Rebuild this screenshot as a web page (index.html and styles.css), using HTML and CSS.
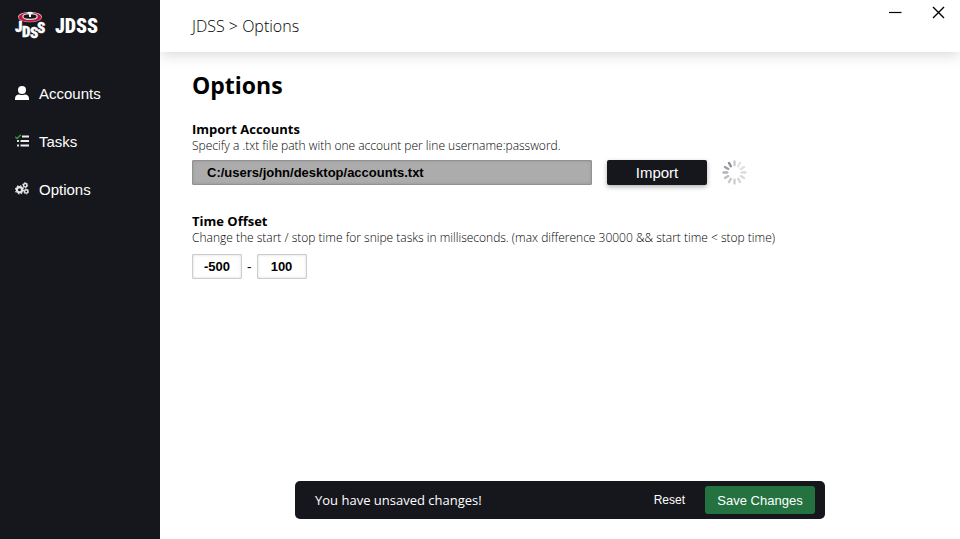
FILE: index.html
```html
<!DOCTYPE html>
<html lang="en">
<head>
<meta charset="utf-8">
<title>JDSS - Options</title>
<link rel="stylesheet" href="styles.css">
</head>
<body>
<div class="app">
  <aside class="sidebar">
    <div class="brand">
      <svg class="brand-mark" viewBox="0 0 30 30" aria-hidden="true">
        <ellipse cx="15" cy="6" rx="12" ry="5.300" fill="#d0bcc2"/>
        <ellipse cx="15" cy="6.200" rx="11.300" ry="4.600" fill="#c20f3b"/>
        <ellipse cx="15" cy="5.500" rx="7.200" ry="2.900" fill="#16171c" stroke="#ddd" stroke-width="1.300"/>
        <path d="M12.500 1h5v1.500L16 3.500V6h-2V3.500l-1.500-1z" fill="#f4f4f4"/>
        <g class="brand-glyphs">
          <text x="0" y="21">J</text>
          <text x="7" y="26">D</text>
          <text x="15" y="27">S</text>
          <text x="22" y="22">S</text>
        </g>
      </svg>
      <span class="brand-name">JDSS</span>
    </div>
    <nav class="nav">
      <a class="nav-link" href="#accounts">
        <svg class="nav-icon" viewBox="0 0 14 14" aria-hidden="true"><circle cx="7" cy="4" r="4" fill="#fff"/><path d="M0 14v-1.500C0 10 2 8.500 4 8.500c2 .8 4 .8 6 0 2 0 4 1.500 4 4V14z" fill="#fff"/></svg>
        Accounts
      </a>
      <a class="nav-link" href="#tasks">
        <svg class="nav-icon" viewBox="0 0 14 14" aria-hidden="true"><path d="M7 2.500h7M5.500 7H14M5.500 11.500H14" stroke="#eee" stroke-width="1.900"/><path d="M2 7h2M2 11.500h2" stroke="#ddd" stroke-width="1.800"/><path d="m.3 2.800 1.800 1.700L5.800.7" fill="none" stroke="#2d9a36" stroke-width="1.400"/></svg>
        Tasks
      </a>
      <a class="nav-link" href="#options">
        <svg class="nav-icon" viewBox="0 0 14 14" aria-hidden="true">
          <g fill="none" stroke="#e6e6e8">
            <circle cx="4.500" cy="7.800" r="2.600" stroke-width="2.200"/><circle cx="4.500" cy="7.800" r="4" stroke-width="1.200" stroke-dasharray="1.570 1.570"/>
            <circle cx="10.200" cy="3.200" r="1.700" stroke-width="1.500"/><circle cx="10.200" cy="3.200" r="2.600" stroke-width=".8" stroke-dasharray="1.360 1.360"/>
            <circle cx="11.200" cy="9.400" r="1.700" stroke-width="1.500"/><circle cx="11.200" cy="9.400" r="2.600" stroke-width=".8" stroke-dasharray="1.360 1.360"/>
          </g>
        </svg>
        Options
      </a>
    </nav>
  </aside>
  <div class="main">
    <header class="topbar">
      <div class="crumbs">JDSS &gt; Options</div>
      <div class="window-buttons">
        <button class="window-button" type="button" aria-label="Minimize"><svg viewBox="0 0 13 13" aria-hidden="true"><path d="M0 6.500h12.500" stroke="#000" stroke-width="1.200"/></svg></button>
        <button class="window-button" type="button" aria-label="Close"><svg viewBox="0 0 13 13" aria-hidden="true"><path d="m1 1 11 11M12 1 1 12" stroke="#000" stroke-width="1.400"/></svg></button>
      </div>
    </header>
    <main class="content">
      <h1 class="title">Options</h1>
      <section class="setting">
        <h2 class="setting-title"><label for="path">Import Accounts</label></h2>
        <p class="setting-text">Specify a .txt file path with one account per line username:password.</p>
        <div class="import-row">
          <input class="field path-field" id="path" type="text" value="C:/users/john/desktop/accounts.txt">
          <button class="import-button" type="button">Import</button>
          <svg class="spinner" viewBox="-13 -13 26 26" aria-hidden="true">
            <g stroke-width="2.400" stroke-linecap="round">
              <path d="M0-7.500V-11.500" stroke="#c9c9cc"/>
              <path d="M0-7.500V-11.500" stroke="#e2e2e5" transform="rotate(30)"/>
              <path d="M0-7.500V-11.500" stroke="#e0e0e3" transform="rotate(60)"/>
              <path d="M0-7.500V-11.500" stroke="#dcdcdf" transform="rotate(90)"/>
              <path d="M0-7.500V-11.500" stroke="#d9d9dc" transform="rotate(120)"/>
              <path d="M0-7.500V-11.500" stroke="#d5d5d8" transform="rotate(150)"/>
              <path d="M0-7.500V-11.500" stroke="#ceced2" transform="rotate(180)"/>
              <path d="M0-7.500V-11.500" stroke="#c8c8cc" transform="rotate(210)"/>
              <path d="M0-7.500V-11.500" stroke="#bebec3" transform="rotate(240)"/>
              <path d="M0-7.500V-11.500" stroke="#b2b2b8" transform="rotate(270)"/>
              <path d="M0-7.500V-11.500" stroke="#9d9da5" transform="rotate(300)"/>
              <path d="M0-7.500V-11.500" stroke="#8b8b93" transform="rotate(330)"/>
            </g>
          </svg>
        </div>
      </section>
      <section class="setting">
        <h2 class="setting-title">Time Offset</h2>
        <p class="setting-text">Change the start / stop time for snipe tasks in milliseconds. (max difference 30000 &amp;&amp; start time &lt; stop time)</p>
        <div class="offset-row">
          <input class="field time-field" type="text" value="-500" aria-label="Start offset">
          <span>-</span>
          <input class="field time-field" type="text" value="100" aria-label="Stop offset">
        </div>
      </section>
    </main>
    <div class="notice" role="status">
      <span class="notice-text">You have unsaved changes!</span>
      <button class="reset-button" type="button">Reset</button>
      <button class="save-button" type="button">Save Changes</button>
    </div>
  </div>
</div>
</body>
</html>
```
FILE: styles.css
```css
* {
  box-sizing: border-box;
}

body {
  margin: 0;
  background: #fff;
  color: #000;
  font-family: "Open Sans", "Noto Sans", sans-serif;
}

button,
input {
  margin: 0;
  border: 0;
  font-family: "Liberation Sans", sans-serif;
}

button {
  cursor: pointer;
}

.app {
  display: grid;
  grid-template-columns: 160px 1fr;
  min-height: 100vh;
}

.sidebar {
  z-index: 1;
  background: #16171c;
  color: #fff;
}

.brand {
  display: flex;
  align-items: center;
  gap: 10px;
  height: 52px;
  padding-left: 15px;
}

.brand-mark {
  width: 30px;
  height: 30px;
  overflow: visible;
}

.brand-glyphs {
  fill: #fff;
  stroke: #fff;
  stroke-width: 0.4px;
  font: 900 15px "Roboto Condensed", Roboto, sans-serif;
}

.brand-name {
  font: 900 20px "Roboto Condensed", Roboto, sans-serif;
}

.nav {
  padding-top: 17px;
}

.nav-link {
  display: flex;
  align-items: center;
  gap: 10px;
  height: 48px;
  padding-left: 15px;
  color: #fff;
  font: 15px "Liberation Sans", sans-serif;
  text-decoration: none;
}

.nav-icon {
  width: 14px;
  height: 14px;
}

.main {
  display: flex;
  flex-direction: column;
}

.topbar {
  display: flex;
  justify-content: space-between;
  height: 52px;
  padding-left: 32px;
  box-shadow: 0 2px 14px rgba(0, 0, 0, 0.17);
}

.crumbs {
  font-size: 16px;
  font-weight: 300;
  line-height: 53px;
}

.window-buttons {
  display: flex;
  gap: 30px;
  padding: 6px 15px 0 0;
}

.window-button {
  width: 13px;
  height: 13px;
  padding: 0;
  background: none;
}

.window-button svg {
  display: block;
}

.content {
  flex: 1;
  padding: 15px 32px;
}

.title {
  margin: 0 0 18px;
  font-size: 23px;
  line-height: 36px;
}

.setting {
  margin-bottom: 28px;
}

.setting-title {
  margin: 0;
  font-size: 13px;
  line-height: 16px;
}

.setting-text {
  margin: 0 0 6px;
  font-size: 12px;
  font-weight: 300;
  line-height: 17px;
}

.import-row {
  display: flex;
  align-items: center;
  gap: 15px;
}

.field {
  height: 25px;
  border: 1px solid #ccc;
  border-radius: 1px;
  box-shadow: inset 0 0 3px rgba(0, 0, 0, 0.15);
  color: #000;
  font-size: 13px;
  font-weight: bold;
}

.path-field {
  width: 400px;
  padding: 0 14px;
  border-color: #929292;
  background: #acacac;
}

.import-button {
  width: 100px;
  height: 25px;
  border-radius: 2px;
  background: #16171c;
  box-shadow: 0 2px 5px rgba(0, 0, 0, 0.3);
  color: #fff;
  font-size: 15px;
}

.spinner {
  width: 25px;
  height: 25px;
}

.offset-row {
  display: flex;
  align-items: center;
  gap: 5px;
  padding-top: 2px;
  font-size: 14px;
  line-height: 25px;
}

.time-field {
  width: 50px;
  padding: 0;
  text-align: center;
}

.notice {
  display: flex;
  align-items: center;
  align-self: center;
  gap: 20px;
  width: 530px;
  max-width: 100%;
  margin-bottom: 20px;
  padding: 5px 10px 5px 20px;
  border-radius: 5px;
  background: #16171c;
  color: #fff;
}

.notice-text {
  flex: 1;
  font-size: 13px;
}

.reset-button {
  padding: 0;
  background: none;
  color: #fff;
  font-size: 12px;
}

.save-button {
  width: 110px;
  height: 28px;
  padding: 0;
  border-radius: 3px;
  background: #237240;
  color: #fff;
  font-size: 13px;
}
```
